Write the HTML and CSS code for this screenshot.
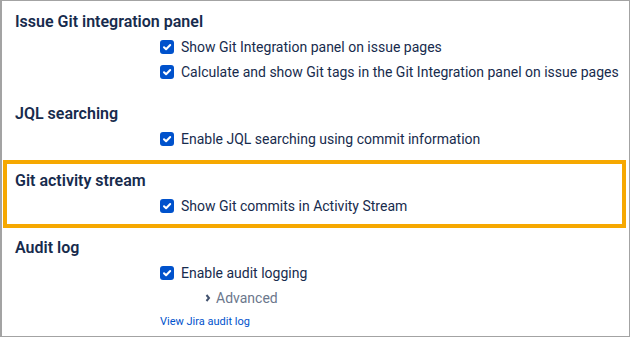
FILE: index.html
```html
<!DOCTYPE html>
<html lang="en">
<head>
  <meta charset="UTF-8">
  <meta name="viewport" content="width=device-width, initial-scale=1.0">
  <title>Git Integration settings</title>
  <link rel="stylesheet" href="styles.css">
</head>
<body>
  <div class="frame">
    <section class="group">
      <h2>Issue Git integration panel</h2>
      <label class="option">
        <span class="check"><svg viewBox="0 0 14 14"><path d="M4 7.2l2.1 2.1L10.2 5"/></svg></span>
        Show Git Integration panel on issue pages
      </label>
      <label class="option">
        <span class="check"><svg viewBox="0 0 14 14"><path d="M4 7.2l2.1 2.1L10.2 5"/></svg></span>
        Calculate and show Git tags in the Git Integration panel on issue pages
      </label>
    </section>

    <section class="group">
      <h2>JQL searching</h2>
      <label class="option">
        <span class="check"><svg viewBox="0 0 14 14"><path d="M4 7.2l2.1 2.1L10.2 5"/></svg></span>
        Enable JQL searching using commit information
      </label>
    </section>

    <section class="group highlight">
      <h2>Git activity stream</h2>
      <label class="option">
        <span class="check"><svg viewBox="0 0 14 14"><path d="M4 7.2l2.1 2.1L10.2 5"/></svg></span>
        Show Git commits in Activity Stream
      </label>
    </section>

    <section class="group">
      <h2>Audit log</h2>
      <label class="option">
        <span class="check"><svg viewBox="0 0 14 14"><path d="M4 7.2l2.1 2.1L10.2 5"/></svg></span>
        Enable audit logging
      </label>
      <div class="advanced">
        <svg class="chevron" viewBox="0 0 6 8"><path d="M1.5 1l2.5 3-2.5 3"/></svg>
        Advanced
      </div>
      <a class="audit-link" href="#">View Jira audit log</a>
    </section>
  </div>
</body>
</html>
```
FILE: styles.css
```css
body {
  margin: 0;
  font-family: Roboto, "Liberation Sans", sans-serif;
  color: #172b4d;
  background: #ffffff;
}

.frame {
  box-sizing: border-box;
  width: 630px;
  height: 337px;
  border: 1px solid #a3a3a3;
  border-left-width: 2px;
  padding: 9px 0 0 13px;
  display: flex;
  flex-direction: column;
  gap: 18px;
  overflow: hidden;
}

.group {
  position: relative;
  display: flex;
  flex-direction: column;
}

h2 {
  margin: 0;
  font-size: 16px;
  font-weight: 600;
  line-height: 24px;
}

.option {
  display: flex;
  align-items: center;
  gap: 7px;
  height: 25px;
  padding-left: 145px;
  font-size: 14px;
}

.check {
  flex: none;
  width: 14px;
  height: 14px;
  border-radius: 3px;
  background: #0052cc;
  display: flex;
}

.check svg {
  width: 14px;
  height: 14px;
  fill: none;
  stroke: #ffffff;
  stroke-width: 2;
  stroke-linecap: round;
  stroke-linejoin: round;
}

/* annotation box around the activity stream section */
.highlight::after {
  content: "";
  position: absolute;
  top: -9px;
  bottom: -10px;
  left: -12px;
  right: 3px;
  border: 4px solid #f6a800;
}

.advanced {
  display: flex;
  align-items: center;
  gap: 5px;
  height: 25px;
  padding-left: 190px;
  font-size: 14px;
  color: #6b778c;
}

.chevron {
  width: 6px;
  height: 8px;
  fill: none;
  stroke: #42526e;
  stroke-width: 2;
}

.audit-link {
  align-self: flex-start;
  margin-left: 145px;
  line-height: 24px;
  font-size: 11px;
  color: #0052cc;
  text-decoration: none;
}
```
